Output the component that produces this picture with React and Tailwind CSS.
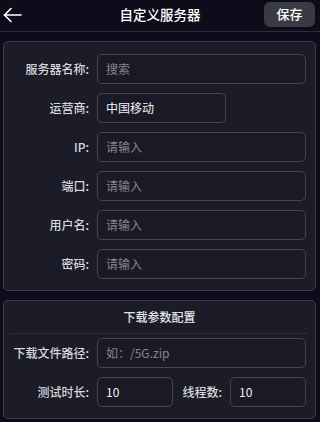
import React from 'react';

const Field = ({ label, value, placeholder, width }) => (
    <div className="flex items-center">
        <div className="w-[76px] shrink-0 text-right text-[12px] font-medium text-[#d8d8dc]">{label}</div>
        <div
            className={`ml-[8px] h-[30px] flex items-center px-[8px] rounded-[5px] border border-[#45444f] bg-[#1a1925] text-[12px] ${width ? 'w-[129px]' : 'flex-1'}`}
        >
            {value ? (
                <span className="text-[#f2f2f4]">{value}</span>
            ) : (
                <span className="text-[#86858d]">{placeholder}</span>
            )}
        </div>
    </div>
);

const SmallInput = ({ value }) => (
    <div className="w-[76px] shrink-0 h-[30px] flex items-center px-[8px] rounded-[5px] border border-[#45444f] bg-[#1a1925] text-[12px] text-[#f2f2f4]">
        {value}
    </div>
);

const App = () => {
    return (
        <div className="w-[320px] h-[422px] overflow-hidden bg-[#0e0c1a] font-['Noto_Sans_CJK_SC',sans-serif]">
            {/* 顶部栏 */}
            <div className="h-[32px] border-b border-[#2c2b38] grid grid-cols-[1fr_auto_1fr] items-center">
                <div className="pl-[3px] pb-[2px]">
                    <svg width="19" height="16" viewBox="0 0 19 16" fill="none" stroke="#ffffff" strokeWidth="1.6" strokeLinecap="round" strokeLinejoin="round">
                        <path d="M18 8H1.5" />
                        <path d="M8 1.5L1.5 8L8 14.5" />
                    </svg>
                </div>
                <div className="text-[13.5px] font-medium text-white pb-[2px]">自定义服务器</div>
                <div className="flex justify-end pr-[5px] pb-[3px]">
                    <button className="w-[51px] h-[25px] rounded-[6px] bg-[#3a3a44] text-[13px] font-medium text-white">保存</button>
                </div>
            </div>

            <div className="pt-[9px] pl-[3px] pr-[4px]">
                {/* 服务器信息 */}
                <div className="rounded-[5px] border border-[#3c3b48] bg-[#1c1b28] px-[9px] pt-[12px] pb-[11px] flex flex-col gap-[9px]">
                    <Field label="服务器名称:" placeholder="搜索" />
                    <Field label="运营商:" value="中国移动" width />
                    <Field label="IP:" placeholder="请输入" />
                    <Field label="端口:" placeholder="请输入" />
                    <Field label="用户名:" placeholder="请输入" />
                    <Field label="密码:" placeholder="请输入" />
                </div>

                {/* 下载参数 */}
                <div className="mt-[9px] rounded-[5px] border border-[#3c3b48] bg-[#1c1b28] pb-[11px]">
                    <div className="h-[32px] flex items-center justify-center text-[12px] font-medium text-[#e4e4e8]">下载参数配置</div>
                    <div className="ml-[6px] mr-[8px] border-b border-[#2e2d3a]" />
                    <div className="px-[9px] pt-[4px] flex flex-col gap-[9px]">
                        <Field label="下载文件路径:" placeholder="如：/5G.zip" />
                        <div className="flex items-center">
                            <div className="w-[76px] shrink-0 text-right text-[12px] font-medium text-[#d8d8dc]">测试时长:</div>
                            <div className="ml-[8px] flex items-center">
                                <SmallInput value="10" />
                                <div className="ml-[9px] w-[40px] shrink-0 text-right whitespace-nowrap text-[12px] font-medium text-[#d8d8dc]">线程数:</div>
                                <div className="ml-[8px]">
                                    <SmallInput value="10" />
                                </div>
                            </div>
                        </div>
                    </div>
                </div>
            </div>
        </div>
    );
};

export default App;
